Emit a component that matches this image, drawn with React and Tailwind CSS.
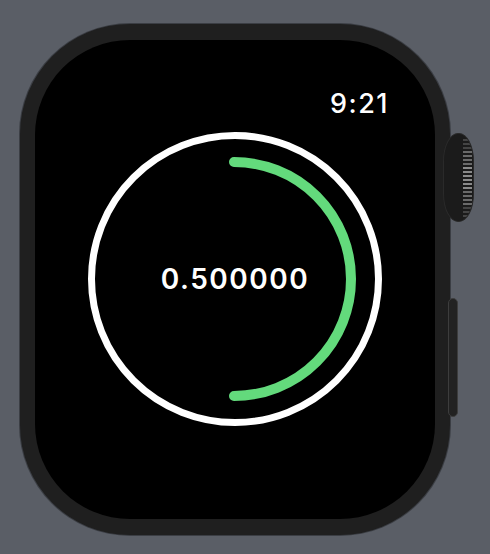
import React from 'react';

const ridges = Array.from({ length: 20 }, (_, i) => i);

function Crown() {
  return (
    <div className="absolute left-[423px] top-[109px] w-[31px] h-[89px] rounded-[15px/28px] bg-[#1b1b1b] border border-[#2a2a2a] overflow-hidden flex flex-col justify-center items-end pr-[1px] gap-[2px]">
      {ridges.map(i => {
        const d = Math.abs(i - 9.5) / 9.5;
        const shade = d < 0.35 ? 'bg-[#8a8a8a]' : d < 0.7 ? 'bg-[#6a6a6a]' : 'bg-[#444]';
        return <div key={i} className={`w-[9px] h-[2px] ${shade}`} />;
      })}
    </div>
  );
}

export default function App() {
  return (
    <div className="w-[490px] h-[554px] bg-[#5a5e66] pt-[24px] pl-[20px] font-['Inter','Liberation_Sans',sans-serif]">
      <div className="relative w-[430px] h-[511px] rounded-[110px] bg-[#1f1f1f] shadow-[0_0_0_1px_#3b3e44] p-[15px] pt-[16px]">
        <Crown />
        <div className="absolute left-[428px] top-[274px] w-[10px] h-[119px] rounded-[5px] bg-[#222] border border-[#3d3d3d]" />

        <div className="w-[400px] h-[479px] rounded-[95px] bg-black flex flex-col items-center">
          <div className="w-full flex justify-end pr-[46px] pt-[49px]">
            <span className="text-white text-[27px] leading-[30px] font-medium tracking-[1.5px]">9:21</span>
          </div>
          <div className="relative w-[294px] h-[294px] mt-[13px]">
            <svg width="294" height="294" viewBox="0 0 294 294">
              <circle cx="147" cy="147" r="143.5" fill="none" stroke="#ffffff" strokeWidth="7" />
              <path d="M146 30 A117 117 0 0 1 146 264" fill="none" stroke="#63da7c" strokeWidth="10" strokeLinecap="round" />
            </svg>
            <div className="absolute inset-0 flex items-center justify-center">
              <span className="text-white text-[28px] font-semibold tracking-[1.5px]">0.500000</span>
            </div>
          </div>
        </div>
      </div>
    </div>
  );
}
